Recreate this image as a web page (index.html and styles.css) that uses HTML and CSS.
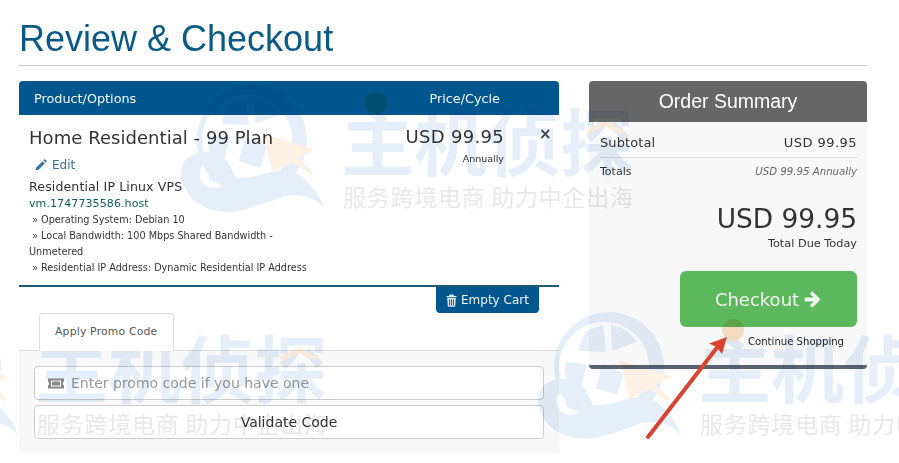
FILE: index.html
```html
<!DOCTYPE html>
<html lang="en">
<head>
<meta charset="utf-8">
<title>Review &amp; Checkout</title>
<link rel="stylesheet" href="styles.css">
</head>
<body>
<main class="page">
  <h1 class="title">Review &amp; Checkout</h1>
  <div class="columns">
    <section class="cart">
      <div class="cart-head">
        <span>Product/Options</span>
        <span class="cart-head-price">Price/Cycle</span>
      </div>
      <div class="item">
        <div class="item-info">
          <div class="item-name">Home Residential - 99 Plan</div>
          <a class="edit">
            <svg class="edit-icon" viewBox="0 0 14 14"><path d="M0.5 13.5l0.9-3.6 7.4-7.4 2.7 2.7-7.4 7.4zM9.7 1.6l1-1q0.6-0.5 1.2 0l1.5 1.5q0.5 0.6 0 1.2l-1 1z"/></svg>
            Edit
          </a>
          <div class="item-group">Residential IP Linux VPS</div>
          <div class="item-host">vm.1747735586.host</div>
          <div class="item-opt"><span class="opt-mark">»</span> Operating System: Debian 10</div>
          <div class="item-opt"><span class="opt-mark">»</span> Local Bandwidth: 100 Mbps Shared Bandwidth - Unmetered</div>
          <div class="item-opt"><span class="opt-mark">»</span> Residential IP Address: Dynamic Residential IP Address</div>
        </div>
        <div class="item-price">
          <div class="price-value">USD 99.95</div>
          <div class="price-cycle">Annually</div>
        </div>
        <div class="item-remove">×</div>
      </div>
      <div class="cart-actions">
        <button class="empty-btn">
          <svg class="trash-icon" viewBox="0 0 12 14"><path d="M4 0.5h4l0.8 1.5h2.7v1.5H0.5V2h2.7zM1.3 4.4h9.4l-0.6 8.4q-0.1 1-1 1H2.9q-0.9 0-1-1zM3.4 5.6v6.8h1V5.6zM5.5 5.6v6.8h1V5.6zM7.6 5.6v6.8h1V5.6z" fill-rule="evenodd"/></svg>
          Empty Cart
        </button>
      </div>
      <div class="tabs">
        <div class="tab">Apply Promo Code</div>
      </div>
      <div class="promo">
        <div class="promo-input">
          <svg class="ticket-icon" viewBox="0 0 16 11"><path d="M0 0.5h16v3q-1.2 0.4-1.2 2t1.200 2v3H0v-3q1.200-0.4 1.200-2T0 3.500zM3 2.500v6h10v-6z" fill-rule="evenodd"/><path d="M4 3.500h8v4H4z"/></svg>
          Enter promo code if you have one
        </div>
        <button class="promo-btn">Validate Code</button>
      </div>
    </section>
    <aside class="summary">
      <h2 class="summary-head">Order Summary</h2>
      <div class="summary-body">
        <div class="sum-row sum-sub"><span>Subtotal</span><span class="sum-sub-value">USD 99.95</span></div>
        <div class="sum-row sum-totals"><span>Totals</span><em class="sum-cycle">USD 99.95 Annually</em></div>
        <div class="sum-total">USD 99.95</div>
        <div class="sum-due">Total Due Today</div>
        <div class="sum-actions">
          <button class="checkout">Checkout
            <svg class="arrow-icon" viewBox="0 0 16 15"><path d="M1.500 5.800h7.200L5.800 3q-0.700-0.700 0-1.400l0.800-0.800q0.700-0.700 1.400 0l6.100 6q0.700 0.700 0 1.400l-6.100 6q-0.700 0.700-1.400 0l-0.800-0.800q-0.700-0.700 0-1.400l2.900-2.800H1.500q-1 0-1-1V6.800q0-1 1-1z"/></svg>
          </button>
        </div>
        <a class="continue">Continue Shopping</a>
      </div>
    </aside>
  </div>
</main>

<svg class="overlay watermark" viewBox="0 0 899 463" aria-hidden="true">
  <defs>
    <g id="mark">
      <g class="wm-blue">
        <path fill-rule="evenodd" d="M252 85a55 55 0 1 1-.1 0zM247 95a45 45 0 1 0 .1 0z"/>
        <path d="M231 103l15-5 3 27-27-1q1-12 9-21zM254 98q16 2 26 17l-25 9zM245 137l-6 24 21 7 7-22zM208 135l22 2-5 21-14 0q-4-12-3-23z"/>
        <path fill-rule="evenodd" d="M181 178Q180 156 200 152Q218 150 228 162L236 178Q255 178 270 172Q295 165 310 185Q320 195 324 208Q310 192 285 196Q255 208 232 212Q190 212 181 178zM200 170Q198 185 212 188Q224 188 228 178Q222 184 214 182Q206 180 210 172Q212 168 207 165Q201 165 200 170z"/>
      </g>
      <path class="wm-orange" d="M262 133l53 17-17 8 15 14-3 2-17-12-20 10z"/>
      <text class="wm-big" x="341" y="170" textLength="292">主机侦探</text>
      <circle class="wm-dot" cx="376" cy="103" r="11"/>
      <path class="wm-orange" d="M585 131l20-11 20 11-4 3-16-8-16 8z"/>
      <text class="wm-small" x="343" y="206" textLength="290">服务跨境电商 助力中企出海</text>
    </g>
  </defs>
  <use href="#mark"/>
  <use href="#mark" x="-306" y="227"/>
  <use href="#mark" x="357" y="227"/>
</svg>
<svg class="overlay" viewBox="0 0 899 463" aria-hidden="true">
  <path class="red-line" d="M648 437L719 345"/>
  <path class="red-head" d="M727 337L709 343.500 716.500 347 722 354z"/>
</svg>
</body>
</html>
```
FILE: styles.css
```css
* { box-sizing: border-box; }
html, body { margin: 0; background: #fff; }
body {
  width: 899px;
  height: 463px;
  overflow: hidden;
  position: relative;
  font-family: "DejaVu Sans", Verdana, sans-serif;
  color: #333;
}
.page { padding: 0 32px 0 19px; }
.title {
  margin: 0;
  height: 66px;
  padding-top: 19px;
  border-bottom: 1px solid #ccc;
  font: 400 36px/40px "Liberation Sans", Arial, sans-serif;
  color: #0a5a85;
}
.columns {
  display: grid;
  grid-template-columns: 540px 278px;
  column-gap: 30px;
  margin-top: 15px;
}
.cart-head {
  height: 34px;
  padding: 1px 59px 0 15px;
  display: flex;
  justify-content: space-between;
  align-items: center;
  background: #00578e;
  border-radius: 4px 4px 0 0;
  color: #f2f6f9;
  font-size: 12.800px;
}
.item {
  height: 172px;
  display: grid;
  grid-template-columns: 290px 185px 1fr;
  padding: 11px 0 0 10px;
  border-bottom: 2px solid #1d5a78;
  align-items: start;
}
.item-name { font-size: 18px; line-height: 24px; letter-spacing: .05px; color: #333; }
.edit {
  display: flex;
  align-items: center;
  gap: 5px;
  margin: 6px 0 0 6px;
  height: 18px;
  font-size: 12px;
  color: #3a6f96;
}
.edit-icon { width: 12px; height: 12px; fill: #3a75a8; }
.item-group { margin-top: 4px; font-size: 12.600px; line-height: 18px; letter-spacing: .1px; }
.item-host { font-size: 11px; line-height: 16px; color: #0c5a5f; letter-spacing: .1px; }
.item-opt { font-size: 9.700px; line-height: 16px; color: #333; }
.opt-mark { margin-left: 3px; }
.item-price { text-align: right; }
.price-value { font-size: 18px; line-height: 22px; letter-spacing: .3px; }
.price-cycle { margin-top: 4px; font-size: 9.500px; line-height: 14px; }
.item-remove { padding-left: 35px; font-size: 15px; font-weight: 700; line-height: 16px; color: #444; }
.cart-actions { display: flex; justify-content: flex-end; padding-right: 20px; height: 26px; }
.empty-btn {
  display: flex;
  align-items: center;
  gap: 4px;
  width: 103px;
  height: 26px;
  padding: 0 0 0 10px;
  border: 0;
  border-radius: 0 0 4px 4px;
  background: #00578e;
  color: #eef4f8;
  font: 12px "DejaVu Sans", Verdana, sans-serif;
}
.trash-icon { width: 11px; height: 13px; fill: #dde8ef; }
.tabs { display: flex; padding-left: 20px; height: 38px; position: relative; }
.tab {
  width: 135px;
  height: 38px;
  border: 1px solid #ddd;
  border-bottom: 0;
  border-radius: 3px 3px 0 0;
  background: #fff;
  padding-top: 11px;
  padding-left: 15px;
  font-size: 10.800px;
  line-height: 14px;
  color: #555;
  letter-spacing: .2px;
  position: relative;
  z-index: 1;
}
.promo {
  margin-top: -1px;
  height: 103px;
  padding: 15px 15px 0;
  background: #f8f8f8;
  border-top: 1px solid #ddd;
}
.promo-input {
  display: flex;
  align-items: center;
  gap: 7px;
  height: 34px;
  padding-left: 13px;
  background: #fff;
  border: 1px solid #ccc;
  border-radius: 4px;
  font-size: 14px;
  color: #999;
}
.ticket-icon { width: 16px; height: 11px; fill: #888; }
.promo-btn {
  display: block;
  width: 100%;
  height: 34px;
  margin-top: 5px;
  background: #fff;
  border: 1px solid #ccc;
  border-radius: 4px;
  font: 14px "DejaVu Sans", Verdana, sans-serif;
  color: #333;
}
.summary {
  height: 288px;
  display: flex;
  flex-direction: column;
  border-radius: 4px;
  border-bottom: 4px solid #5a6270;
  background: #f8f8f8;
  overflow: hidden;
}
.summary-head {
  margin: 0;
  height: 41px;
  background: #666;
  color: #fff;
  text-align: center;
  font: 400 19.500px/40px "Liberation Sans", Arial, sans-serif;
}
.summary-body { padding: 11px 10px 0 11px; display: flex; flex-direction: column; }
.sum-row { display: flex; justify-content: space-between; }
.sum-sub { height: 25px; border-bottom: 1px solid #ddd; font-size: 13px; line-height: 19px; letter-spacing: .1px; }
.sum-sub-value { letter-spacing: .45px; }
.sum-totals { margin-top: 6px; height: 16px; font-size: 11px; line-height: 16px; }
.sum-cycle { font-size: 10.200px; color: #666; }
.sum-total { margin-top: 24px; text-align: right; font-size: 26.400px; line-height: 30px; }
.sum-due { margin-top: 3px; text-align: right; font-size: 11.300px; line-height: 14px; }
.sum-actions { display: flex; justify-content: flex-end; margin-top: 20px; }
.checkout {
  display: flex;
  align-items: center;
  justify-content: center;
  gap: 5px;
  width: 177px;
  height: 56px;
  border: 0;
  border-radius: 6px;
  background: #5cb85c;
  color: #f0f8f0;
  font: 18px "DejaVu Sans", Verdana, sans-serif;
}
.arrow-icon { width: 18px; height: 17px; fill: #f0f8f0; }
.continue { margin: 8px 13px 0 0; text-align: right; font-size: 10.100px; line-height: 14px; color: #222; }
.overlay { position: absolute; left: 0; top: 0; width: 899px; height: 463px; pointer-events: none; }
.watermark { mix-blend-mode: multiply; }
.wm-blue { fill: #e6eff9; }
.wm-orange { fill: #fdf1e4; }
.wm-dot { fill: #fbe3c8; }
.wm-big {
  font: 700 73px "Noto Sans CJK SC", sans-serif;
  fill: #e6eff9;
}
.wm-small {
  font: 400 23px "Noto Sans CJK SC", sans-serif;
  fill: #e8e8e8;
}
.red-line { stroke: #d8442f; stroke-width: 4; stroke-linecap: round; fill: none; }
.red-head { fill: #d8442f; }
```
